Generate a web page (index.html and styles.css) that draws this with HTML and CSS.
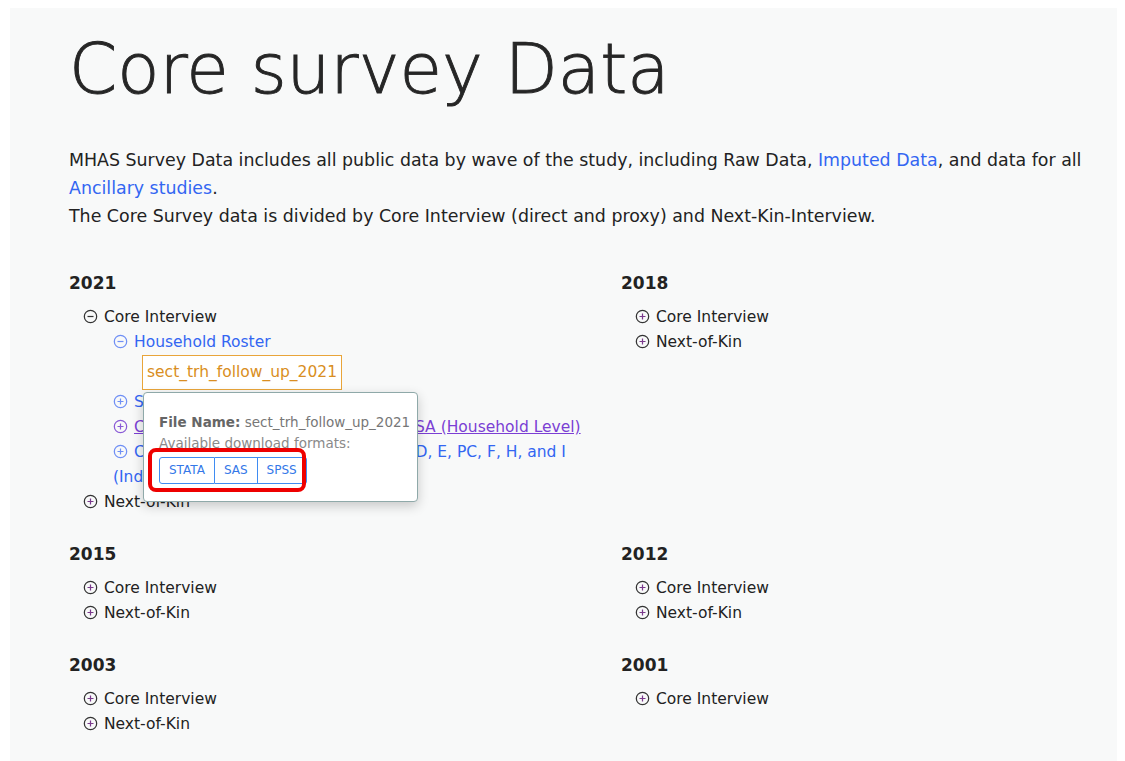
FILE: index.html
```html
<!DOCTYPE html>
<html lang="en">
<head>
    <meta charset="UTF-8">
    <meta name="viewport" content="width=device-width, initial-scale=1.0">
    <title>Core survey Data - MHAS</title>
    <link rel="stylesheet" href="styles.css">
</head>
<body>
    <div class="page">
        <h1 class="page-title">Core survey Data</h1>

        <p class="intro">
            MHAS Survey Data includes all public data by wave of the study, including Raw Data, <a href="#" class="link">Imputed Data</a>, and data for all <a href="#" class="link">Ancillary studies</a>.<br>
            The Core Survey data is divided by Core Interview (direct and proxy) and Next-Kin-Interview.
        </p>

        <div class="years">
            <div class="year">
                <h3 class="year-title">2021</h3>
                <ul class="tree">
                    <li>
                        <span class="toggle"><svg viewBox="0 0 16 16"><circle cx="8" cy="8" r="6.6"/><path d="M4.8 8h6.4"/></svg></span>Core Interview
                        <ul class="tree sub">
                            <li class="blue">
                                <span class="toggle"><svg viewBox="0 0 16 16"><circle cx="8" cy="8" r="6.6"/><path d="M4.8 8h6.4"/></svg></span>Household Roster
                                <div class="file-row">
                                    <div class="file">
                                        sect_trh_follow_up_2021
                                        <div class="popover">
                                            <div class="pop-name"><strong>File Name:</strong> sect_trh_follow_up_2021</div>
                                            <div class="pop-formats">Available download formats:</div>
                                            <div class="btn-group">
                                                <a href="#" class="btn">STATA</a><a href="#" class="btn">SAS</a><a href="#" class="btn">SPSS</a>
                                            </div>
                                            <div class="highlight-box"></div>
                                        </div>
                                    </div>
                                </div>
                            </li>
                            <li class="blue">
                                <span class="toggle"><svg viewBox="0 0 16 16"><circle cx="8" cy="8" r="6.6"/><path d="M4.8 8h6.4M8 4.8v6.4"/></svg></span>Sociodemographics
                            </li>
                            <li class="purple">
                                <span class="toggle"><svg viewBox="0 0 16 16"><circle cx="8" cy="8" r="6.6"/><path d="M4.8 8h6.4M8 4.8v6.4"/></svg></span><a href="#" class="visited">Coversheet and Sections A, AA, AC, SA (Household Level)</a>
                            </li>
                            <li class="blue">
                                <span class="toggle"><svg viewBox="0 0 16 16"><circle cx="8" cy="8" r="6.6"/><path d="M4.8 8h6.4M8 4.8v6.4"/></svg></span>Core Interview Sections A, AA, B, C, D, E, PC, F, H, and I (Individual Level)
                            </li>
                        </ul>
                    </li>
                    <li>
                        <span class="toggle plus"><svg viewBox="0 0 16 16"><circle cx="8" cy="8" r="6.6"/><path d="M4.8 8h6.4M8 4.8v6.4"/></svg></span>Next-of-Kin
                    </li>
                </ul>
            </div>

            <div class="year">
                <h3 class="year-title">2018</h3>
                <ul class="tree">
                    <li><span class="toggle plus"><svg viewBox="0 0 16 16"><circle cx="8" cy="8" r="6.6"/><path d="M4.8 8h6.4M8 4.8v6.4"/></svg></span>Core Interview</li>
                    <li><span class="toggle plus"><svg viewBox="0 0 16 16"><circle cx="8" cy="8" r="6.6"/><path d="M4.8 8h6.4M8 4.8v6.4"/></svg></span>Next-of-Kin</li>
                </ul>
            </div>

            <div class="year">
                <h3 class="year-title">2015</h3>
                <ul class="tree">
                    <li><span class="toggle plus"><svg viewBox="0 0 16 16"><circle cx="8" cy="8" r="6.6"/><path d="M4.8 8h6.4M8 4.8v6.4"/></svg></span>Core Interview</li>
                    <li><span class="toggle plus"><svg viewBox="0 0 16 16"><circle cx="8" cy="8" r="6.6"/><path d="M4.8 8h6.4M8 4.8v6.4"/></svg></span>Next-of-Kin</li>
                </ul>
            </div>

            <div class="year">
                <h3 class="year-title">2012</h3>
                <ul class="tree">
                    <li><span class="toggle plus"><svg viewBox="0 0 16 16"><circle cx="8" cy="8" r="6.6"/><path d="M4.8 8h6.4M8 4.8v6.4"/></svg></span>Core Interview</li>
                    <li><span class="toggle plus"><svg viewBox="0 0 16 16"><circle cx="8" cy="8" r="6.6"/><path d="M4.8 8h6.4M8 4.8v6.4"/></svg></span>Next-of-Kin</li>
                </ul>
            </div>

            <div class="year">
                <h3 class="year-title">2003</h3>
                <ul class="tree">
                    <li><span class="toggle plus"><svg viewBox="0 0 16 16"><circle cx="8" cy="8" r="6.6"/><path d="M4.8 8h6.4M8 4.8v6.4"/></svg></span>Core Interview</li>
                    <li><span class="toggle plus"><svg viewBox="0 0 16 16"><circle cx="8" cy="8" r="6.6"/><path d="M4.8 8h6.4M8 4.8v6.4"/></svg></span>Next-of-Kin</li>
                </ul>
            </div>

            <div class="year">
                <h3 class="year-title">2001</h3>
                <ul class="tree">
                    <li><span class="toggle plus"><svg viewBox="0 0 16 16"><circle cx="8" cy="8" r="6.6"/><path d="M4.8 8h6.4M8 4.8v6.4"/></svg></span>Core Interview</li>
                </ul>
            </div>
        </div>
    </div>
</body>
</html>
```

FILE: styles.css
```css
body {
    margin: 0;
    background: #ffffff;
    font-family: 'DejaVu Sans', 'Noto Sans', sans-serif;
    color: #222222;
}
.page {
    margin: 8px 8px 0 10px;
    padding: 0 0 30px 59px;
    background: #f8f9f9;
    min-height: 753px;
    box-sizing: border-box;
}
.page-title {
    margin: 0;
    padding-top: 18px;
    font-size: 69px;
    font-weight: 300;
    line-height: 86px;
    color: #262626;
    -webkit-text-stroke: 0.9px #262626;
}
.intro {
    margin: 34px 0 0;
    font-size: 17.4px;
    line-height: 28px;
    width: 1040px;
}
.link {
    color: #3366f2;
    text-decoration: none;
}
.years {
    display: grid;
    grid-template-columns: 552px 480px;
    margin-top: 41px;
}
.year {
    padding: 0 20px 27px 0;
}
.year-title {
    margin: 0 0 10px;
    font-size: 17px;
    font-weight: 700;
    line-height: 24px;
    color: #222222;
}
.tree {
    list-style: none;
    margin: 0;
    padding: 0 0 0 14px;
    font-size: 15.5px;
    line-height: 25px;
}
.tree.sub {
    padding-left: 30px;
}
.toggle {
    display: inline-block;
    width: 15px;
    height: 15px;
    margin-right: 6px;
    vertical-align: -2px;
}
.toggle svg {
    display: block;
    width: 15px;
    height: 15px;
    fill: none;
    stroke: #333333;
    stroke-width: 1.3;
}
.toggle.plus svg path {
    stroke: #7a3a8c;
}
.blue {
    color: #3366f2;
}
.blue .toggle svg {
    stroke: #6f8ff5;
}
.purple .toggle svg {
    stroke: #8a5ad6;
}
.visited {
    color: #7b3fd4;
}
.file-row {
    padding-left: 29px;
}
.file {
    position: relative;
    display: inline-block;
    padding: 4px 4px;
    border: 1px solid #e9a53a;
    background: #ffffff;
    color: #d98e22;
    font-size: 15.5px;
}
.popover {
    position: absolute;
    top: calc(100% + 3px);
    left: 0;
    width: 275px;
    height: 110px;
    padding: 19px 0 0 15px;
    box-sizing: border-box;
    background: #ffffff;
    border: 1px solid #8fa9a9;
    border-radius: 4px;
    box-shadow: 0 4px 12px rgba(0, 0, 0, 0.2);
    color: #777777;
    font-size: 13.5px;
    line-height: 21px;
    z-index: 2;
}
.pop-name strong {
    color: #666666;
}
.pop-formats {
    color: #8a8a8a;
}
.btn-group {
    display: flex;
    margin-top: 3px;
}
.btn {
    padding: 0 9px;
    height: 25px;
    line-height: 25px;
    border: 1px solid #3f8cf2;
    color: #3478e8;
    font-size: 12px;
    text-decoration: none;
}
.btn + .btn {
    border-left: none;
}
.btn:first-child {
    border-radius: 3px 0 0 3px;
}
.btn:last-child {
    border-radius: 0 3px 3px 0;
}
.highlight-box {
    position: absolute;
    left: 4px;
    top: 55px;
    width: 158px;
    height: 44px;
    box-sizing: border-box;
    border: 4px solid #ee0000;
    border-radius: 8px;
}
```
